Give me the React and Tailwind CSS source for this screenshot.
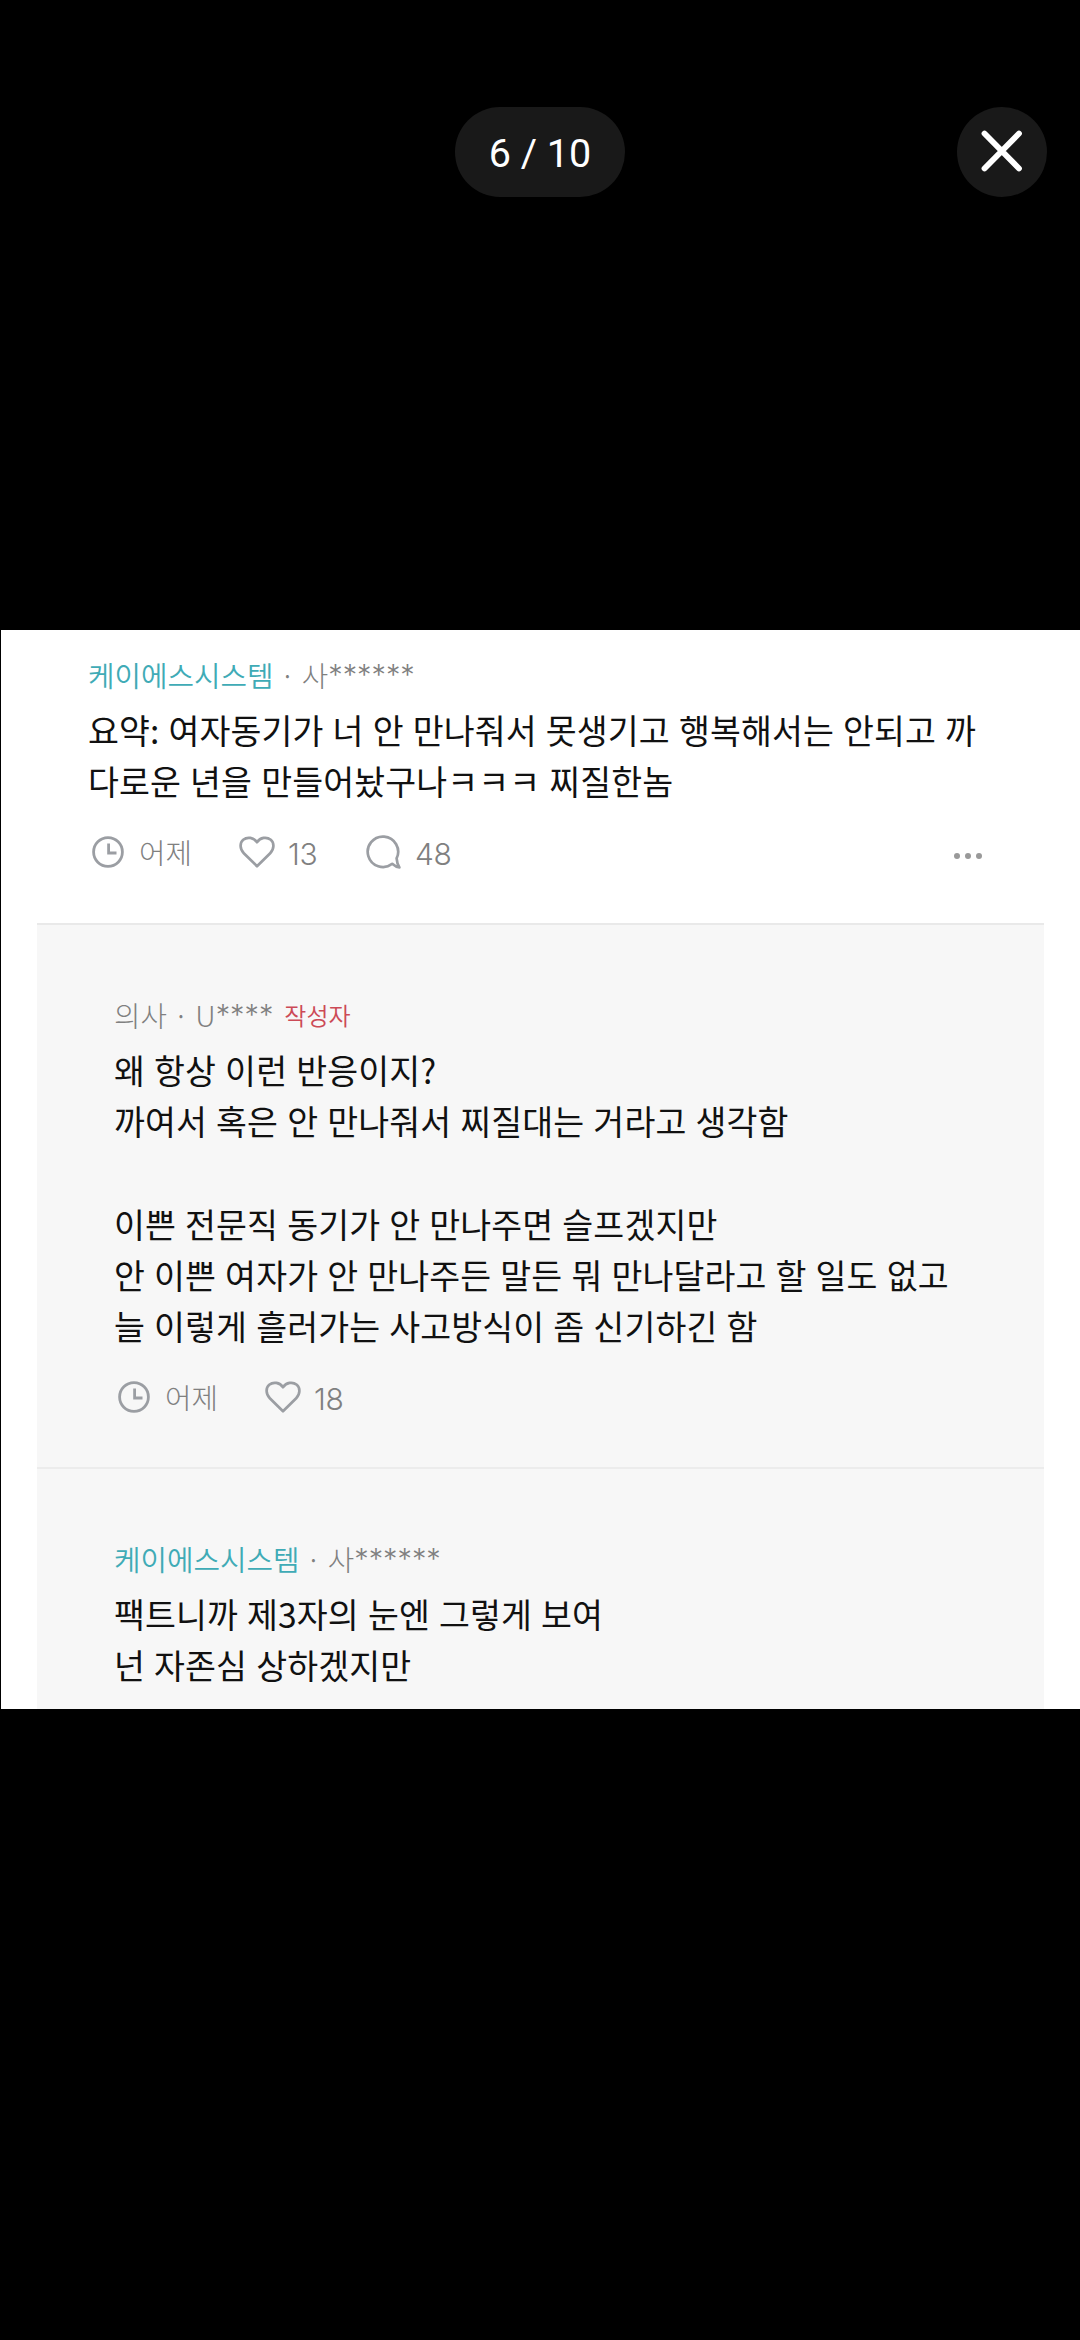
const FONT = "font-['Noto_Sans_CJK_KR',sans-serif]";

function Clock() {
  return (
    <svg className="h-[34px] w-[34px] shrink-0" viewBox="0 0 34 34" fill="none" stroke="#9b9ea3" strokeWidth="2.8">
      <circle cx="17" cy="17" r="14.4" />
      <path d="M17.6 8.5V18H25.5" />
    </svg>
  );
}

function Heart() {
  return (
    <svg className="h-[34px] w-[38px] shrink-0" viewBox="0 0 38 34" fill="none" stroke="#9b9ea3" strokeWidth="2.7" strokeLinejoin="round">
      <path d="M19 31.2L5.8 18.2C1.6 14 1.7 7.6 5.2 4.7C9.4 1.5 15.6 2.4 19 7.2C22.4 2.4 28.6 1.5 32.8 4.7C36.3 7.6 36.4 14 32.2 18.2Z" />
    </svg>
  );
}

function Bubble() {
  return (
    <svg className="h-[36px] w-[36px] shrink-0" viewBox="0 0 36 36" fill="none" stroke="#9b9ea3" strokeWidth="2.7" strokeLinejoin="round">
      <path d="M30.6 24.4A15.2 15.2 0 1 0 26.2 29.8C28.2 31.6 30.6 33.2 33.4 33.4C31.8 30.8 30.8 27.4 30.6 24.4Z" />
    </svg>
  );
}

function Author({ company, initial, stars, writer }) {
  return (
    <div className="flex h-10 items-center whitespace-pre text-[28.8px] font-light leading-10 text-[#808080]">
      <span className={company === "의사" ? "" : "font-[350] text-[#3fabb6]"}>{company}</span>
      <span> · {initial}</span>
      <span className="font-[Inter,sans-serif] text-[28.8px]">{stars}</span>
      {writer && <span className="ml-[11px] text-[24px] font-[350] text-[#cc4a56]">작성자</span>}
    </div>
  );
}

function Body({ lines }) {
  return (
    <div className="mt-[9px] text-[33.6px] leading-[51.2px] tracking-[0.12px] text-[#111] [word-spacing:1.4px]">
      {lines.map((line, i) => (
        <p key={i} className="h-[51.2px] whitespace-pre">{line}</p>
      ))}
    </div>
  );
}

function Stats({ likes, replies }) {
  return (
    <div className="mt-[26px] flex h-10 items-center pl-[3px] text-[28.8px] font-light leading-10 text-[#808080]">
      <Clock />
      <span className="ml-[14px] w-[99px]">어제</span>
      <div className="flex w-[128px] items-center gap-3">
        <Heart />
        <span className="relative top-0.5 font-[Inter,sans-serif] text-[30px] tracking-[-0.3px]">{likes}</span>
      </div>
      {replies && (
        <div className="flex items-center gap-[13px]">
          <Bubble />
          <span className="relative top-0.5 font-[Inter,sans-serif] text-[30px] tracking-[-0.3px]">{replies}</span>
        </div>
      )}
      {replies && (
        <div className="mr-[98px] mt-2 ml-auto flex gap-[5px]">
          <i className="h-1.5 w-1.5 rounded-full bg-[#999]" />
          <i className="h-1.5 w-1.5 rounded-full bg-[#999]" />
          <i className="h-1.5 w-1.5 rounded-full bg-[#999]" />
        </div>
      )}
    </div>
  );
}

export default function App() {
  return (
    <main className="flex h-[2340px] w-[1080px] flex-col overflow-hidden bg-black">
      <header className="grid h-[630px] grid-cols-[1fr_auto_1fr] items-start pt-[107px] pr-[33px]">
        <div className="col-start-2 ml-[33px] flex h-[90px] w-[170px] items-center justify-center rounded-full bg-[#191919] pt-[3px] font-[Roboto,sans-serif] text-[39.5px] text-white">
          6 / 10
        </div>
        <button className="flex h-[90px] w-[90px] items-center justify-center justify-self-end rounded-full bg-[#191919]">
          <svg className="h-11 w-11" viewBox="0 0 44 44" stroke="#fff" strokeWidth="5.8" strokeLinecap="round">
            <path d="M4.5 3.5L39 38.5M39 3.5L4.5 38.5" />
          </svg>
        </button>
      </header>

      <section className={`ml-px flex h-[1079px] flex-col overflow-hidden bg-white ${FONT}`}>
        <article className="h-[293px] shrink-0 pt-[25px] pl-[87px]">
          <Author company="케이에스시스템" initial="사" stars="******" />
          <Body lines={["요약: 여자동기가 너 안 만나줘서 못생기고 행복해서는 안되고 까", "다로운 년을 만들어놨구나ㅋㅋㅋ 찌질한놈"]} />
          <Stats likes="13" replies="48" />
        </article>
        <div className="ml-9 w-[1007px] grow bg-[#f7f7f7]">
          <article className="h-[544px] border-t-2 border-[#e9e9e9] pt-[70px] pl-[77px]">
            <Author company="의사" initial="U" stars="****" writer />
            <Body
              lines={[
                "왜 항상 이런 반응이지?",
                "까여서 혹은 안 만나줘서 찌질대는 거라고 생각함",
                "",
                "이쁜 전문직 동기가 안 만나주면 슬프겠지만",
                "안 이쁜 여자가 안 만나주든 말든 뭐 만나달라고 할 일도 없고",
                "늘 이렇게 흘러가는 사고방식이 좀 신기하긴 함",
              ]}
            />
            <Stats likes="18" />
          </article>
          <article className="border-t-2 border-[#ececec] pt-[70px] pl-[77px]">
            <Author company="케이에스시스템" initial="사" stars="******" />
            <Body lines={["팩트니까 제3자의 눈엔 그렇게 보여", "넌 자존심 상하겠지만"]} />
          </article>
        </div>
      </section>
    </main>
  );
}
